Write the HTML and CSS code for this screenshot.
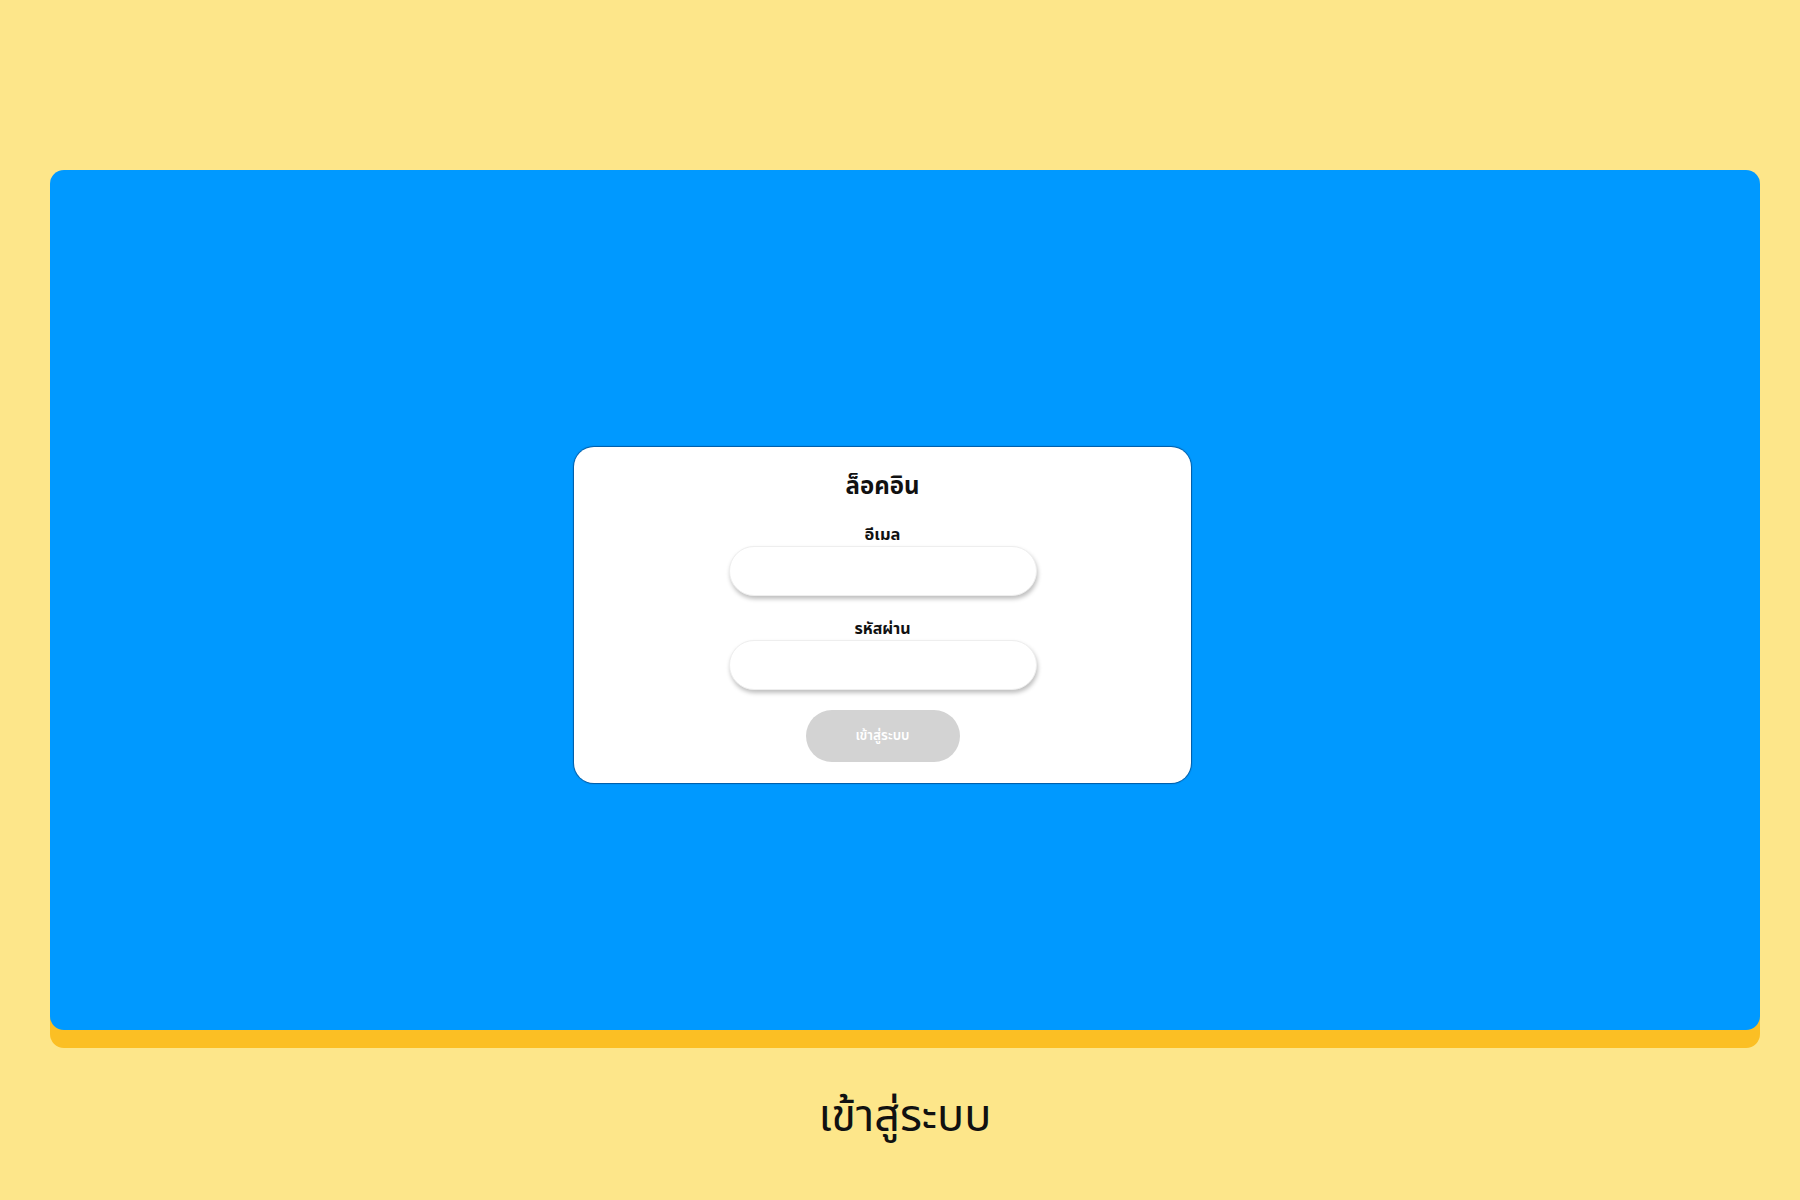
FILE: index.html
```html
<!DOCTYPE html>
<html lang="th">
<head>
<meta charset="utf-8">
<title>เข้าสู่ระบบ</title>
<link rel="stylesheet" href="styles.css">
</head>
<body>
<div class="page">
  <main class="panel">
    <form class="card">
      <h1 class="title">ล็อคอิน</h1>
      <label class="label" for="email">อีเมล</label>
      <input class="field" id="email" type="email">
      <label class="label label-2" for="pw">รหัสผ่าน</label>
      <input class="field" id="pw" type="password">
      <button class="btn" type="button">เข้าสู่ระบบ</button>
    </form>
  </main>
  <p class="caption">เข้าสู่ระบบ</p>
</div>
</body>
</html>
```

FILE: styles.css
```css
html, body {
  margin: 0;
  padding: 0;
  background: #fde68a;
  font-family: "Noto Sans Thai", "Noto Sans", "DejaVu Sans", sans-serif;
  color: #111;
}
.page {
  width: 1800px;
  height: 1200px;
  padding-top: 170px;
  box-sizing: border-box;
}
.panel {
  margin-left: 50px;
  width: 1710px;
  height: 860px;
  box-sizing: border-box;
  background: #0099ff;
  border-radius: 14px;
  box-shadow: 0 18px 0 #fbbf24;
  padding: 277px 0 0 524px;
}
.card {
  width: 617px;
  height: 336px;
  box-sizing: border-box;
  background: #fff;
  border-radius: 20px;
  box-shadow: 0 0 1px 1px rgba(0, 40, 90, 0.55);
  display: flex;
  flex-direction: column;
  align-items: center;
  padding-top: 25px;
}
.title {
  margin: 0;
  font-size: 24px;
  font-weight: 700;
  line-height: 30px;
}
.label {
  margin-top: 23px;
  font-size: 16.5px;
  font-weight: 700;
  line-height: 20px;
}
.label-2 {
  margin-top: 23px;
  font-size: 16px;
}
.field {
  margin-top: 1px;
  width: 308px;
  height: 50px;
  box-sizing: border-box;
  border: 1px solid #eeeeee;
  border-radius: 25px;
  background: #fff;
  box-shadow: 1px 3px 4px rgba(0, 0, 0, 0.25);
  outline: none;
}
.btn {
  margin-top: 20px;
  width: 154px;
  height: 52px;
  border: none;
  border-radius: 26px;
  background: #d3d3d3;
  color: #fff;
  font-family: inherit;
  font-size: 13.5px;
  font-weight: 600;
}
.caption {
  margin: 57px 0 0 50px;
  width: 1710px;
  text-align: center;
  font-size: 45px;
  line-height: 60px;
}
```
